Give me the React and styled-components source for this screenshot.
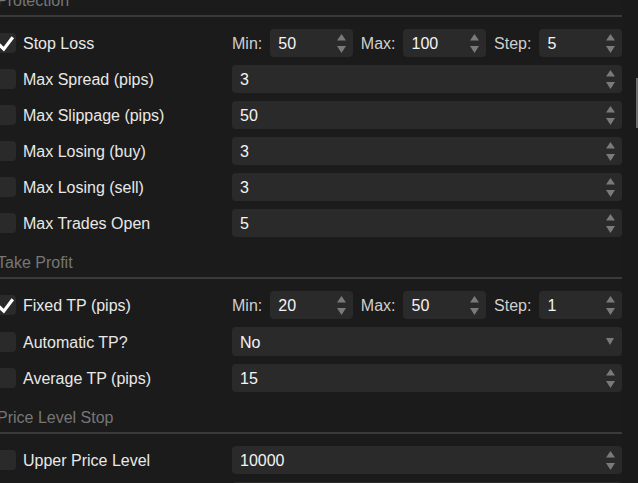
import styled, { createGlobalStyle } from 'styled-components';

const GlobalStyle = createGlobalStyle`
  html, body {
    margin: 0;
    padding: 0;
    background: #1b1b1b;
    overflow: hidden;
  }
  body {
    font-family: "Liberation Sans", Arial, sans-serif;
  }
`;

const Page = styled.div`
  display: flex;
  width: 638px;
  height: 483px;
  overflow: hidden;
  background: #1b1b1b;
`;

const Content = styled.div`
  flex: 1;
  margin: -15px 0 0 -4px;
`;

const Gutter = styled.div`
  width: 16px;
  flex-shrink: 0;
  background: #1a1a1a;
  padding-top: 78px;
  box-sizing: border-box;
`;

const Thumb = styled.div`
  width: 2px;
  height: 50px;
  margin-left: 14px;
  background: #6c6c6c;
`;

const SectionTitle = styled.div`
  height: 30px;
  line-height: 32px;
  font-size: 16px;
  color: #767676;
  border-bottom: 2px solid #3a3a3a;
  margin-left: 4px;
  text-indent: -3px;
  white-space: nowrap;
`;

const Rows = styled.div`
  display: flex;
  flex-direction: column;
  gap: 8px;
  padding: 12px 0 10px;
`;

const Row = styled.div`
  display: flex;
  align-items: center;
`;

const Box = styled.div`
  width: 20px;
  height: 20px;
  flex-shrink: 0;
  border-radius: 4px;
  background: #2a2a2a;
  margin-right: 7px;
  display: flex;
  align-items: center;
  justify-content: center;
`;

const Label = styled.div`
  width: 209px;
  flex-shrink: 0;
  padding-top: 2px;
  font-size: 16px;
  color: #e8e8e8;
  white-space: nowrap;
`;

const Control = styled.div`
  flex: 1;
`;

const RangeGrid = styled.div`
  display: grid;
  grid-template-columns: auto 1fr auto 1fr auto 1fr;
  column-gap: 8px;
  align-items: center;
`;

const RangeLabel = styled.span`
  padding-top: 2px;
  font-size: 16px;
  color: #cfcfcf;
`;

const Field = styled.div`
  display: flex;
  align-items: center;
  height: ${(p) => (p.$select ? 29 : 28)}px;
  box-sizing: border-box;
  padding: 0 7px 0 8px;
  border-radius: 4px;
  background: #2a2a2a;
  font-size: 16px;
  color: #f4f4f4;
`;

const Value = styled.span`
  flex: 1;
  padding-top: 2px;
`;

const Check = () => (
  <svg width="20" height="20" viewBox="0 0 20 20">
    <path d="M2 10.5 L7.8 16.2 L16.8 4.2" fill="none" stroke="#fff" strokeWidth="3.2" />
  </svg>
);

const Spinner = () => (
  <svg width="9" height="19" viewBox="0 0 9 19">
    <path d="M4.5 0 L9 6.5 L0 6.5 Z" fill="#7a7a7a" />
    <path d="M0 12 L9 12 L4.5 19 Z" fill="#7a7a7a" />
  </svg>
);

const Caret = () => (
  <svg width="8" height="7" viewBox="0 0 8 7" style={{ marginRight: '1px' }}>
    <path d="M0 0 L8 0 L4 7 Z" fill="#7a7a7a" />
  </svg>
);

const NumberField = ({ value }) => (
  <Field>
    <Value>{value}</Value>
    <Spinner />
  </Field>
);

const SelectField = ({ value }) => (
  <Field $select>
    <Value>{value}</Value>
    <Caret />
  </Field>
);

const Setting = ({ label, checked, children }) => (
  <Row>
    <Box>{checked && <Check />}</Box>
    <Label>{label}</Label>
    <Control>{children}</Control>
  </Row>
);

const Range = ({ min, max, step }) => (
  <RangeGrid>
    <RangeLabel>Min:</RangeLabel>
    <NumberField value={min} />
    <RangeLabel>Max:</RangeLabel>
    <NumberField value={max} />
    <RangeLabel>Step:</RangeLabel>
    <NumberField value={step} />
  </RangeGrid>
);

export default function App() {
  return (
    <>
      <GlobalStyle />
      <Page>
        <Content>
          <SectionTitle>Protection</SectionTitle>
          <Rows>
            <Setting label="Stop Loss" checked>
              <Range min="50" max="100" step="5" />
            </Setting>
            <Setting label="Max Spread (pips)">
              <NumberField value="3" />
            </Setting>
            <Setting label="Max Slippage (pips)">
              <NumberField value="50" />
            </Setting>
            <Setting label="Max Losing (buy)">
              <NumberField value="3" />
            </Setting>
            <Setting label="Max Losing (sell)">
              <NumberField value="3" />
            </Setting>
            <Setting label="Max Trades Open">
              <NumberField value="5" />
            </Setting>
          </Rows>

          <SectionTitle>Take Profit</SectionTitle>
          <Rows>
            <Setting label="Fixed TP (pips)" checked>
              <Range min="20" max="50" step="1" />
            </Setting>
            <Setting label="Automatic TP?">
              <SelectField value="No" />
            </Setting>
            <Setting label="Average TP (pips)">
              <NumberField value="15" />
            </Setting>
          </Rows>

          <SectionTitle>Price Level Stop</SectionTitle>
          <Rows>
            <Setting label="Upper Price Level">
              <NumberField value="10000" />
            </Setting>
            <Setting label="Lower Price Level">
              <NumberField value="0" />
            </Setting>
          </Rows>
        </Content>
        <Gutter>
          <Thumb />
        </Gutter>
      </Page>
    </>
  );
}
